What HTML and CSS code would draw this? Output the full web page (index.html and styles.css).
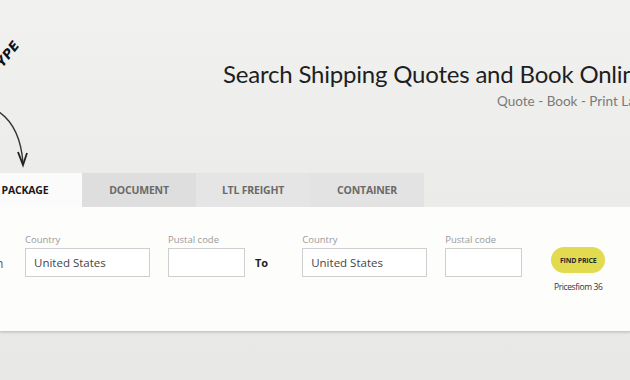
FILE: index.html
```html
<!DOCTYPE html>
<html lang="en">
<head>
    <meta charset="UTF-8">
    <meta name="viewport" content="width=device-width, initial-scale=1.0">
    <title>Shipping Quotes</title>
    <link rel="stylesheet" href="styles.css">
</head>
<body>
    <div class="page">
        <!-- hand-drawn hint over the tabs -->
        <div class="hint-text">TYPE</div>
        <svg class="hint-arrow" width="40" height="180" viewBox="0 0 40 180">
            <path d="M -4 110 Q 20 124 23 163" fill="none" stroke="#333" stroke-width="1.4"/>
            <path d="M 18 152 L 23 165 L 27 153" fill="none" stroke="#222" stroke-width="1.8"/>
        </svg>

        <div class="header">
            <h1 class="title">Search Shipping Quotes and Book Online</h1>
            <div class="subtitle">Quote - Book - Print Labels</div>
        </div>

        <div class="tabs">
            <div class="tab active">PACKAGE</div>
            <div class="tab tab-doc">DOCUMENT</div>
            <div class="tab tab-ltl">LTL FREIGHT</div>
            <div class="tab tab-cont">CONTAINER</div>
        </div>

        <div class="panel">
            <div class="form-row">
                <span class="edge-mark">n</span>
                <div class="field wide">
                    <div class="label">Country</div>
                    <div class="input">United States</div>
                </div>
                <div class="field narrow">
                    <div class="label">Pustal code</div>
                    <div class="input"></div>
                </div>
                <div class="to">To</div>
                <div class="field wide">
                    <div class="label">Country</div>
                    <div class="input">United States</div>
                </div>
                <div class="field narrow">
                    <div class="label">Pustal code</div>
                    <div class="input"></div>
                </div>
                <div class="action">
                    <div class="find-btn">FIND PRICE</div>
                    <div class="price-note">Pricesfiom 36</div>
                </div>
            </div>
        </div>

        <div class="footer-band"></div>
    </div>
</body>
</html>
```

FILE: styles.css
```css
body {
    margin: 0;
    padding: 0;
    background: #e9e9e8;
    font-family: 'Open Sans', 'Liberation Sans', sans-serif;
    color: #222;
    overflow: hidden;
}

.page {
    position: relative;
    width: 630px;
    height: 380px;
    overflow: hidden;
    background: linear-gradient(180deg, #f1f1f0 0%, #ececeb 45%, #e8e8e7 100%);
}

.hint-text {
    position: absolute;
    left: -14px;
    top: 50px;
    font-family: 'DejaVu Sans', sans-serif;
    font-size: 13px;
    font-weight: bold;
    font-style: italic;
    color: #111;
    transform: rotate(-52deg);
    letter-spacing: 0.3px;
}

.hint-arrow {
    position: absolute;
    left: 0;
    top: 0;
}

.header {
    padding: 58px 0 0 223px;
    height: 173px;
    box-sizing: border-box;
}

.title {
    margin: 0;
    font-family: Lato, 'Open Sans', sans-serif;
    font-size: 24px;
    font-weight: 400;
    line-height: 32px;
    color: #1e1e1e;
    white-space: nowrap;
    letter-spacing: -0.2px;
}

.subtitle {
    margin: 3px 0 0 274px;
    font-family: Lato, 'Open Sans', sans-serif;
    font-size: 13.5px;
    color: #7a7a7a;
    white-space: nowrap;
}

.tabs {
    display: flex;
    margin-left: -32px;
    height: 34px;
}

.tab {
    width: 114px;
    display: flex;
    align-items: center;
    justify-content: center;
    font-size: 10.5px;
    font-weight: 700;
    color: #6a6a6a;
    letter-spacing: -0.2px;
}

.tab.active {
    background: #fbfbfb;
    color: #1a1a1a;
}

.tab-doc {
    background: #dedede;
}

.tab-ltl {
    background: #e5e5e5;
}

.tab-cont {
    background: #e3e3e3;
}

.panel {
    background: #fdfdfc;
    height: 124px;
    box-shadow: 0 1px 0 #c9c9c9, 0 2px 2px rgba(0,0,0,0.12);
}

.form-row {
    position: relative;
    display: flex;
    align-items: flex-start;
    padding: 26px 0 0 25px;
}

.edge-mark {
    position: absolute;
    left: -4px;
    top: 48px;
    font-size: 12px;
    color: #555;
}

.field {
    margin-right: 18px;
}

.field.wide {
    width: 125px;
}

.field.narrow {
    width: 77px;
}

.label {
    font-size: 9.5px;
    color: #9a9a9a;
    height: 14px;
    line-height: 14px;
    margin-bottom: 1px;
}

.input {
    height: 29px;
    box-sizing: border-box;
    border: 1px solid #cfcfcf;
    background: #fff;
    font-size: 11.5px;
    line-height: 27px;
    padding-left: 8px;
    color: #444;
}

.to {
    font-size: 11px;
    font-weight: 700;
    color: #222;
    margin: 22px 34px 0 -8px;
}

.action {
    margin-left: 11px;
    padding-top: 14px;
    display: flex;
    flex-direction: column;
    align-items: center;
}

.find-btn {
    width: 54px;
    height: 26px;
    border-radius: 13px;
    background: #e2da4f;
    display: flex;
    align-items: center;
    justify-content: center;
    font-size: 7px;
    font-weight: 700;
    color: #2a2a2a;
    letter-spacing: -0.2px;
}

.price-note {
    margin-top: 8px;
    font-size: 8.5px;
    color: #333;
    white-space: nowrap;
    letter-spacing: -0.4px;
}

.footer-band {
    height: 49px;
}
```
